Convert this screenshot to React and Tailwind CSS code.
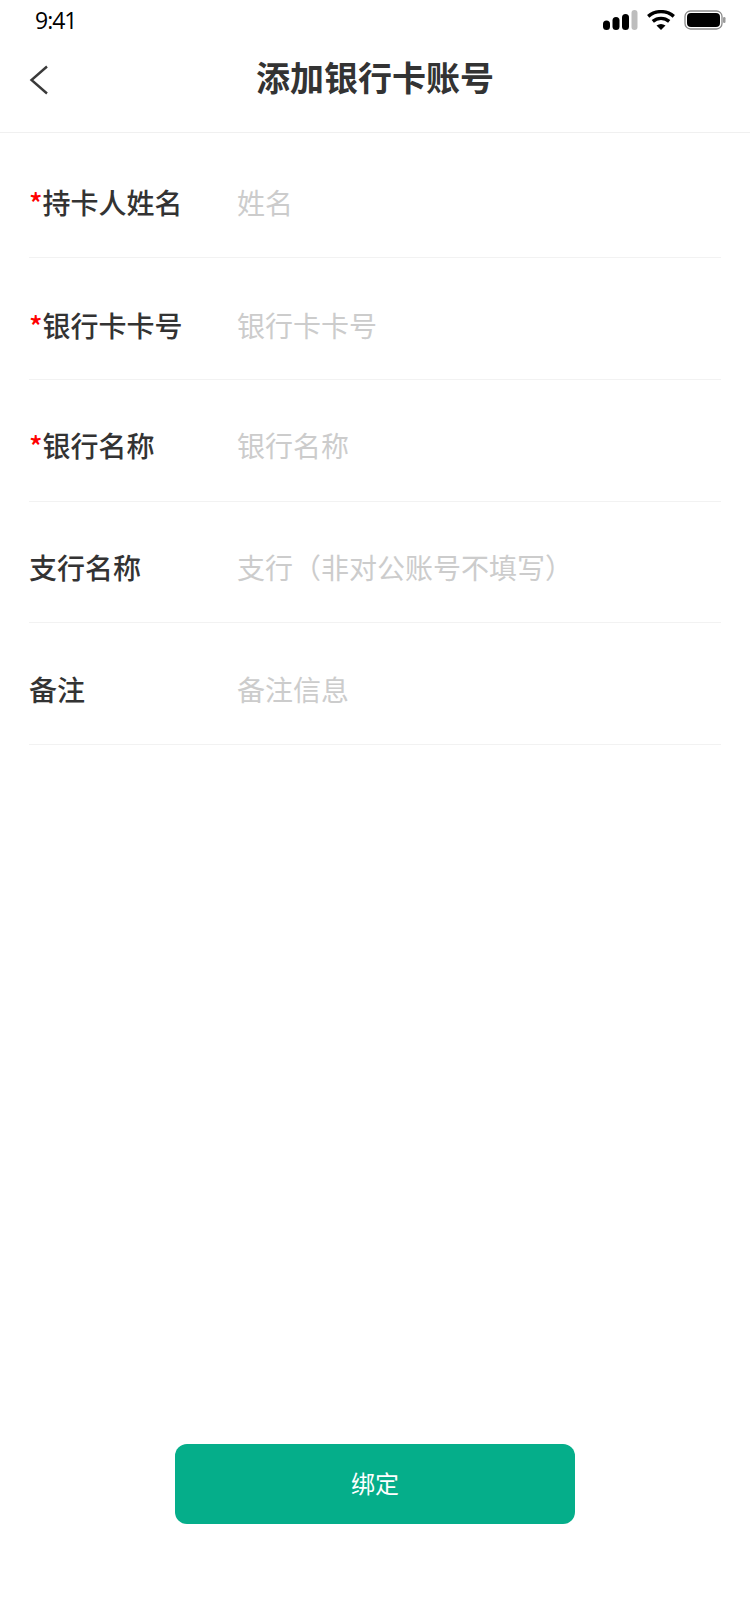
const rows = [
  { label: "持卡人姓名", ph: "姓名", req: true, pad: "pt-[10px]" },
  { label: "银行卡卡号", ph: "银行卡卡号", req: true, pad: "pt-[13px]" },
  { label: "银行名称", ph: "银行名称", req: true, pad: "pt-[10px]" },
  { label: "支行名称", ph: "支行（非对公账号不填写）", pad: "pt-[10px]" },
  { label: "备注", ph: "备注信息", pad: "pt-[10px]" },
];

export default function App() {
  return (
    <div className="w-[750px] h-[1624px] bg-white flex flex-col font-['Noto_Sans_CJK_SC','Noto_Sans',sans-serif]">
      <div className="h-[40px] flex items-center justify-between pl-[35px] pr-[24px] shrink-0">
        <span className="text-[23px] text-black font-['Open_Sans',sans-serif] tracking-[-1px]">9:41</span>
        <div className="flex items-center gap-[9px]">
          <svg width="36" height="22" viewBox="0 0 36 22">
            <rect x="1" y="11.5" width="7" height="9.5" rx="3.5" fill="#000" />
            <rect x="10.5" y="8" width="7" height="13" rx="3.5" fill="#000" />
            <rect x="20" y="5" width="7" height="16" rx="3.5" fill="#000" />
            <rect x="29.5" y="1" width="6" height="20" rx="3" fill="#bdbdbd" />
          </svg>
          <svg width="28" height="20" viewBox="0 0 28 20" fill="none" stroke="#000" strokeWidth="3.4">
            <path d="M1.2 6.4 C8.5 0 19.5 0 26.8 6.4" />
            <path d="M5.8 11.4 C10.5 7.4 17.5 7.4 22.2 11.4" />
            <path d="M9.5 15.6 L14 20 L18.5 15.6 C15.5 13.6 12.5 13.6 9.5 15.6Z" fill="#000" stroke="none" />
          </svg>
          <svg width="42" height="20" viewBox="0 0 42 20">
            <rect x="1" y="1" width="37" height="18" rx="5.5" fill="none" stroke="#8a8a8a" strokeWidth="1.3" />
            <rect x="3" y="3" width="33" height="14" rx="4" fill="#000" />
            <rect x="39" y="7" width="2.5" height="6" rx="1.2" fill="#9a9a9a" />
          </svg>
        </div>
      </div>
      <div className="relative h-[93px] flex items-center justify-center border-b border-[#f0f0f0] shrink-0 pb-[19px]">
        <svg className="absolute left-[28px] top-[24px]" width="24" height="34" viewBox="0 0 24 34" fill="none" stroke="#3a3a3a" strokeWidth="2.4">
          <path d="M19 2.5 L3.5 16 L19 29.5" />
        </svg>
        <h1 className="text-[34px] font-bold text-[#333]">添加银行卡账号</h1>
      </div>
      <div className="px-[29px] pt-[3.25px] shrink-0">
        {rows.map((r) => (
          <div key={r.label} className={`h-[121.75px] ${r.pad} flex items-center border-b border-[#f2f2f2]`}>
            <div className="w-[208px] text-[28px] font-medium text-[#333] whitespace-nowrap">
              {r.req && <span className="text-[#ff0000]">*</span>}{r.label}
            </div>
            <div className="text-[28px] text-[#cccccc] whitespace-nowrap">{r.ph}</div>
          </div>
        ))}
      </div>
      <div className="flex-1 flex flex-col items-center justify-end pb-[100px]">
        <button className="w-[400px] h-[80px] rounded-[12px] bg-[#05ae8a] text-white text-[24px] pb-[2px]">绑定</button>
      </div>
    </div>
  );
}
